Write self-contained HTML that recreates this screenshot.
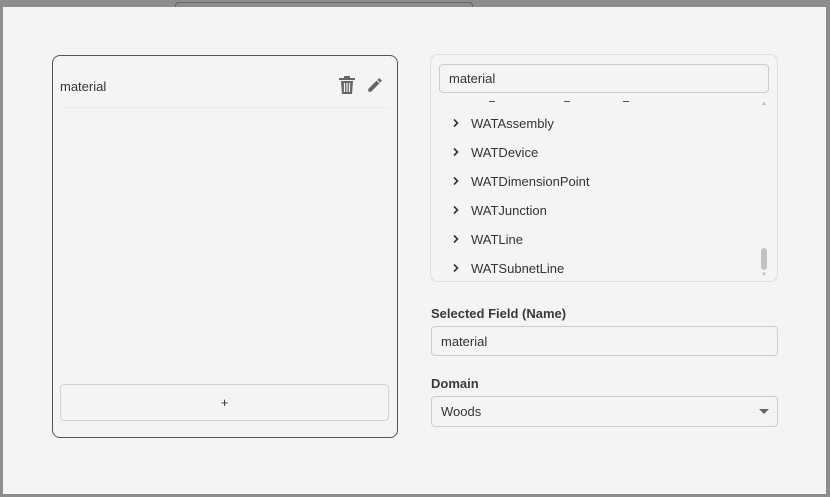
<!DOCTYPE html>
<html><head><style>
*{box-sizing:border-box;margin:0;padding:0}
body{width:830px;height:497px;background:#8d8d8d;font-family:"Liberation Sans",sans-serif;position:relative;overflow:hidden;color:#333}
.modal{position:absolute;left:3px;top:7px;width:823px;height:487px;background:#f4f4f4}
.abs{position:absolute}
.left{left:52px;top:55px;width:346px;height:383px;border:1px solid #555;border-radius:8px}
.right{left:430px;top:54px;width:348px;height:228px;border:1px solid #ddd;border-radius:8px}
.inp{border:1px solid #ccc;border-radius:4px;background:#f4f4f4;font-size:13px;padding-left:9px;display:flex;align-items:center;color:#333}
.item{position:absolute;left:471px;font-size:13px;color:#333}
.chev{position:absolute;left:452px}
.lbl{font-size:13px;font-weight:bold;color:#3a3a3a}
</style></head><body>
<div class="abs" style="left:175px;top:2px;width:298px;height:6px;border:1px solid #666;border-bottom:none;border-radius:4px 4px 0 0"></div>
<div class="modal"></div>
<div class="abs left"></div>
<div class="abs" style="left:60px;top:79px;font-size:13px">material</div>
<div class="abs" style="left:60px;top:107px;width:329px;height:1px;background:#ebebeb"></div>
<svg class="abs" style="left:338px;top:75px" width="18" height="20" viewBox="0 0 18 20"><path d="M6 1h6v2h5v2H1V3h5z" fill="#666"/><path d="M3 6h12l-1 13H4z" fill="#666"/><path d="M6.5 8v9M9 8v9M11.5 8v9" stroke="#f4f4f4" stroke-width="1.2"/></svg>
<svg class="abs" style="left:366px;top:76px" width="18" height="18" viewBox="0 0 24 24"><path d="M3 17.25V21h3.75L17.81 9.94l-3.75-3.75L3 17.25zM20.71 7.04a1 1 0 000-1.41l-2.34-2.34a1 1 0 00-1.41 0l-1.83 1.83 3.75 3.75 1.83-1.83z" fill="#666"/></svg>
<div class="abs" style="left:60px;top:384px;width:329px;height:37px;border:1px solid #d4d4d4;border-radius:4px;text-align:center;line-height:36px;font-size:13px">+</div>
<div class="abs right"></div>
<div class="abs inp" style="left:439px;top:64px;width:330px;height:29px">material</div>
<div class="abs" style="left:489px;top:101px;width:6px;height:1px;background:#555"></div>
<div class="abs" style="left:564px;top:101px;width:6px;height:1px;background:#555"></div>
<div class="abs" style="left:623px;top:101px;width:6px;height:1px;background:#555"></div>
<svg class="chev" style="top:118px" width="8" height="10" viewBox="0 0 8 10"><path d="M2 1.5l3.5 3.5L2 8.5" stroke="#333" stroke-width="1.6" fill="none"/></svg><div class="item" style="top:116px">WATAssembly</div>
<svg class="chev" style="top:147px" width="8" height="10" viewBox="0 0 8 10"><path d="M2 1.5l3.5 3.5L2 8.5" stroke="#333" stroke-width="1.6" fill="none"/></svg><div class="item" style="top:145px">WATDevice</div>
<svg class="chev" style="top:176px" width="8" height="10" viewBox="0 0 8 10"><path d="M2 1.5l3.5 3.5L2 8.5" stroke="#333" stroke-width="1.6" fill="none"/></svg><div class="item" style="top:174px">WATDimensionPoint</div>
<svg class="chev" style="top:205px" width="8" height="10" viewBox="0 0 8 10"><path d="M2 1.5l3.5 3.5L2 8.5" stroke="#333" stroke-width="1.6" fill="none"/></svg><div class="item" style="top:203px">WATJunction</div>
<svg class="chev" style="top:234px" width="8" height="10" viewBox="0 0 8 10"><path d="M2 1.5l3.5 3.5L2 8.5" stroke="#333" stroke-width="1.6" fill="none"/></svg><div class="item" style="top:232px">WATLine</div>
<svg class="chev" style="top:263px" width="8" height="10" viewBox="0 0 8 10"><path d="M2 1.5l3.5 3.5L2 8.5" stroke="#333" stroke-width="1.6" fill="none"/></svg><div class="item" style="top:261px">WATSubnetLine</div>
<div class="abs" style="left:761px;top:101px;font-size:6px;color:#bbb">&#9650;</div>
<div class="abs" style="left:761px;top:248px;width:6px;height:22px;background:#c2c2c2;border-radius:3px"></div>
<div class="abs" style="left:761px;top:272px;font-size:6px;color:#bbb">&#9660;</div>
<div class="abs lbl" style="left:431px;top:306px">Selected Field (Name)</div>
<div class="abs inp" style="left:431px;top:326px;width:347px;height:30px">material</div>
<div class="abs lbl" style="left:431px;top:376px">Domain</div>
<div class="abs inp" style="left:431px;top:396px;width:347px;height:31px">Woods</div>
<div class="abs" style="left:759px;top:409px;width:0;height:0;border-left:5px solid transparent;border-right:5px solid transparent;border-top:5px solid #666"></div>
</body></html>
